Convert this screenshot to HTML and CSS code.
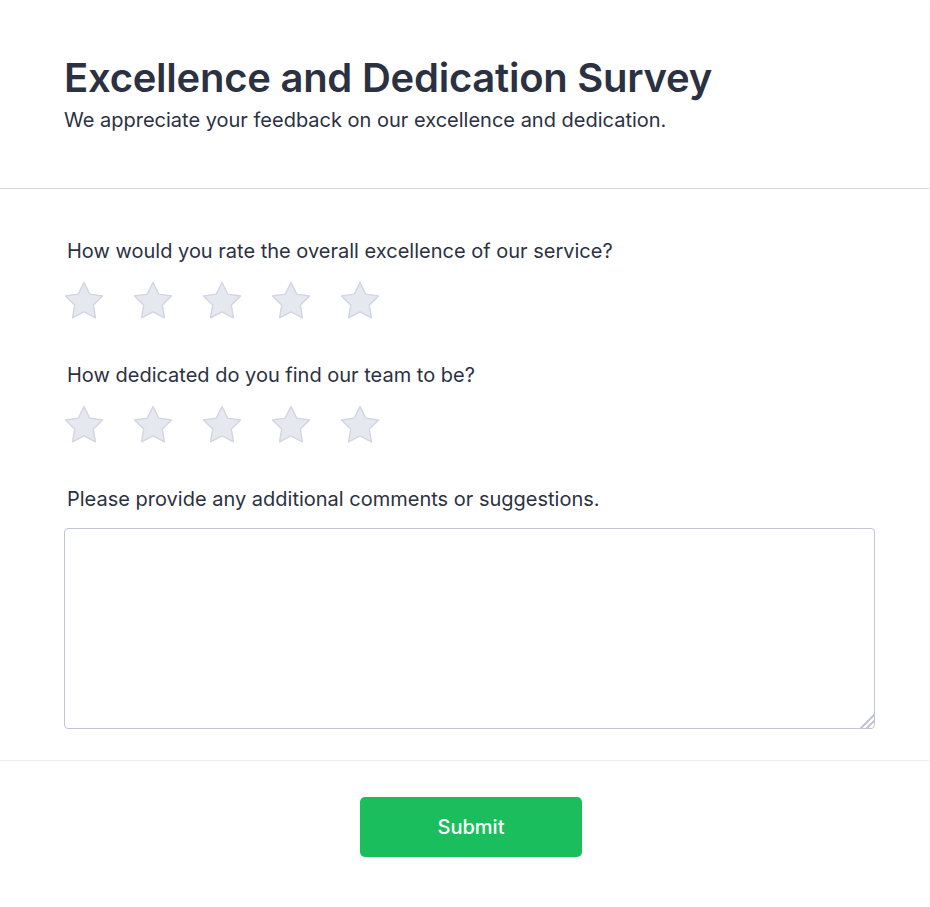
FILE: index.html
```html
<!DOCTYPE html>
<html lang="en">
<head>
<meta charset="utf-8">
<title>Excellence and Dedication Survey</title>
<link rel="stylesheet" href="styles.css">
</head>
<body>
<div class="card">
  <header class="header">
    <h1 class="title">Excellence and Dedication Survey</h1>
    <p class="subtitle">We appreciate your feedback on our excellence and dedication.</p>
  </header>
  <main class="body">
    <div class="question">
      <label class="label">How would you rate the overall excellence of our service?</label>
      <div class="stars">
        <svg class="star" viewBox="0 0 40 40"><path d="M20 1.5L25.76 13.07 38.55 14.97 29.32 24.03 31.47 36.78 20 30.8 8.53 36.78 10.68 24.03 1.45 14.97 14.24 13.07Z"/></svg>
        <svg class="star" viewBox="0 0 40 40"><path d="M20 1.5L25.76 13.07 38.55 14.97 29.32 24.03 31.47 36.78 20 30.8 8.53 36.78 10.68 24.03 1.45 14.97 14.24 13.07Z"/></svg>
        <svg class="star" viewBox="0 0 40 40"><path d="M20 1.5L25.76 13.07 38.55 14.97 29.32 24.03 31.47 36.78 20 30.8 8.53 36.78 10.68 24.03 1.45 14.97 14.24 13.07Z"/></svg>
        <svg class="star" viewBox="0 0 40 40"><path d="M20 1.5L25.76 13.07 38.55 14.97 29.32 24.03 31.47 36.78 20 30.8 8.53 36.78 10.68 24.03 1.45 14.97 14.24 13.07Z"/></svg>
        <svg class="star" viewBox="0 0 40 40"><path d="M20 1.5L25.76 13.07 38.55 14.97 29.32 24.03 31.47 36.78 20 30.8 8.53 36.78 10.68 24.03 1.45 14.97 14.24 13.07Z"/></svg>
      </div>
    </div>
    <div class="question">
      <label class="label">How dedicated do you find our team to be?</label>
      <div class="stars">
        <svg class="star" viewBox="0 0 40 40"><path d="M20 1.5L25.76 13.07 38.55 14.97 29.32 24.03 31.47 36.78 20 30.8 8.53 36.78 10.68 24.03 1.45 14.97 14.24 13.07Z"/></svg>
        <svg class="star" viewBox="0 0 40 40"><path d="M20 1.5L25.76 13.07 38.55 14.97 29.32 24.03 31.47 36.78 20 30.8 8.53 36.78 10.68 24.03 1.45 14.97 14.24 13.07Z"/></svg>
        <svg class="star" viewBox="0 0 40 40"><path d="M20 1.5L25.76 13.07 38.55 14.97 29.32 24.03 31.47 36.78 20 30.8 8.53 36.78 10.68 24.03 1.45 14.97 14.24 13.07Z"/></svg>
        <svg class="star" viewBox="0 0 40 40"><path d="M20 1.5L25.76 13.07 38.55 14.97 29.32 24.03 31.47 36.78 20 30.8 8.53 36.78 10.68 24.03 1.45 14.97 14.24 13.07Z"/></svg>
        <svg class="star" viewBox="0 0 40 40"><path d="M20 1.5L25.76 13.07 38.55 14.97 29.32 24.03 31.47 36.78 20 30.8 8.53 36.78 10.68 24.03 1.45 14.97 14.24 13.07Z"/></svg>
      </div>
    </div>
    <div class="question last">
      <label class="label">Please provide any additional comments or suggestions.</label>
      <textarea class="comments"></textarea>
    </div>
  </main>
  <footer class="footer">
    <button class="submit" type="button">Submit</button>
  </footer>
</div>
</body>
</html>
```
FILE: styles.css
```css
* { box-sizing: border-box; }
html, body { margin: 0; padding: 0; background: #ffffff; }
body { font-family: Inter, "Noto Sans", sans-serif; color: #2d3142; }
.card {
  width: 929px;
  height: 906px;
  background: #ffffff;
  box-shadow: 0 0 2px rgba(40, 40, 80, 0.08);
  display: flex;
  flex-direction: column;
}
.header {
  padding: 54px 64px 0;
  height: 189px;
  border-bottom: 1px solid #d6d6e8;
}
.title {
  margin: 0;
  font-size: 40px;
  line-height: 48px;
  font-weight: 600;
  letter-spacing: -0.25px;
  color: #2c3142;
}
.subtitle {
  margin: 4px 0 0;
  font-size: 20px;
  line-height: 28px;
  font-weight: 400;
  color: #2c3142;
}
.body {
  padding: 48px 54px 31px 64px;
  border-bottom: 1px solid #ececf3;
}
.question { margin-bottom: 40px; }
.question.last { margin-bottom: 0; }
.label {
  display: block;
  padding-left: 3px;
  font-size: 20px;
  line-height: 28px;
  font-weight: 400;
  color: #2c3142;
}
.stars {
  display: flex;
  gap: 29px;
  margin-top: 16px;
}
.star {
  width: 40px;
  height: 40px;
  display: block;
}
.star path {
  fill: #e6e8f0;
  stroke: #d3d6e2;
  stroke-width: 1.4;
  stroke-linejoin: round;
}
.comments {
  display: block;
  margin-top: 15px;
  width: 811px;
  height: 201px;
  border: 1px solid #c2c3d6;
  border-radius: 4px;
  resize: vertical;
  font-family: inherit;
  font-size: 16px;
}
.comments::-webkit-resizer {
  background: linear-gradient(135deg, transparent 0 52%, #c5c7d6 52% 60%, transparent 60% 72%, #c5c7d6 72% 80%, transparent 80%);
}
.footer {
  flex: 1;
  display: flex;
  justify-content: center;
  align-items: flex-start;
  padding: 36px 0 0 13px;
  background: #ffffff;
}
.submit {
  width: 222px;
  height: 60px;
  border: none;
  border-radius: 5px;
  background: #1bbe5d;
  color: #ffffff;
  font-family: Inter, "Noto Sans", sans-serif;
  font-size: 20px;
  font-weight: 500;
  cursor: pointer;
}
```
